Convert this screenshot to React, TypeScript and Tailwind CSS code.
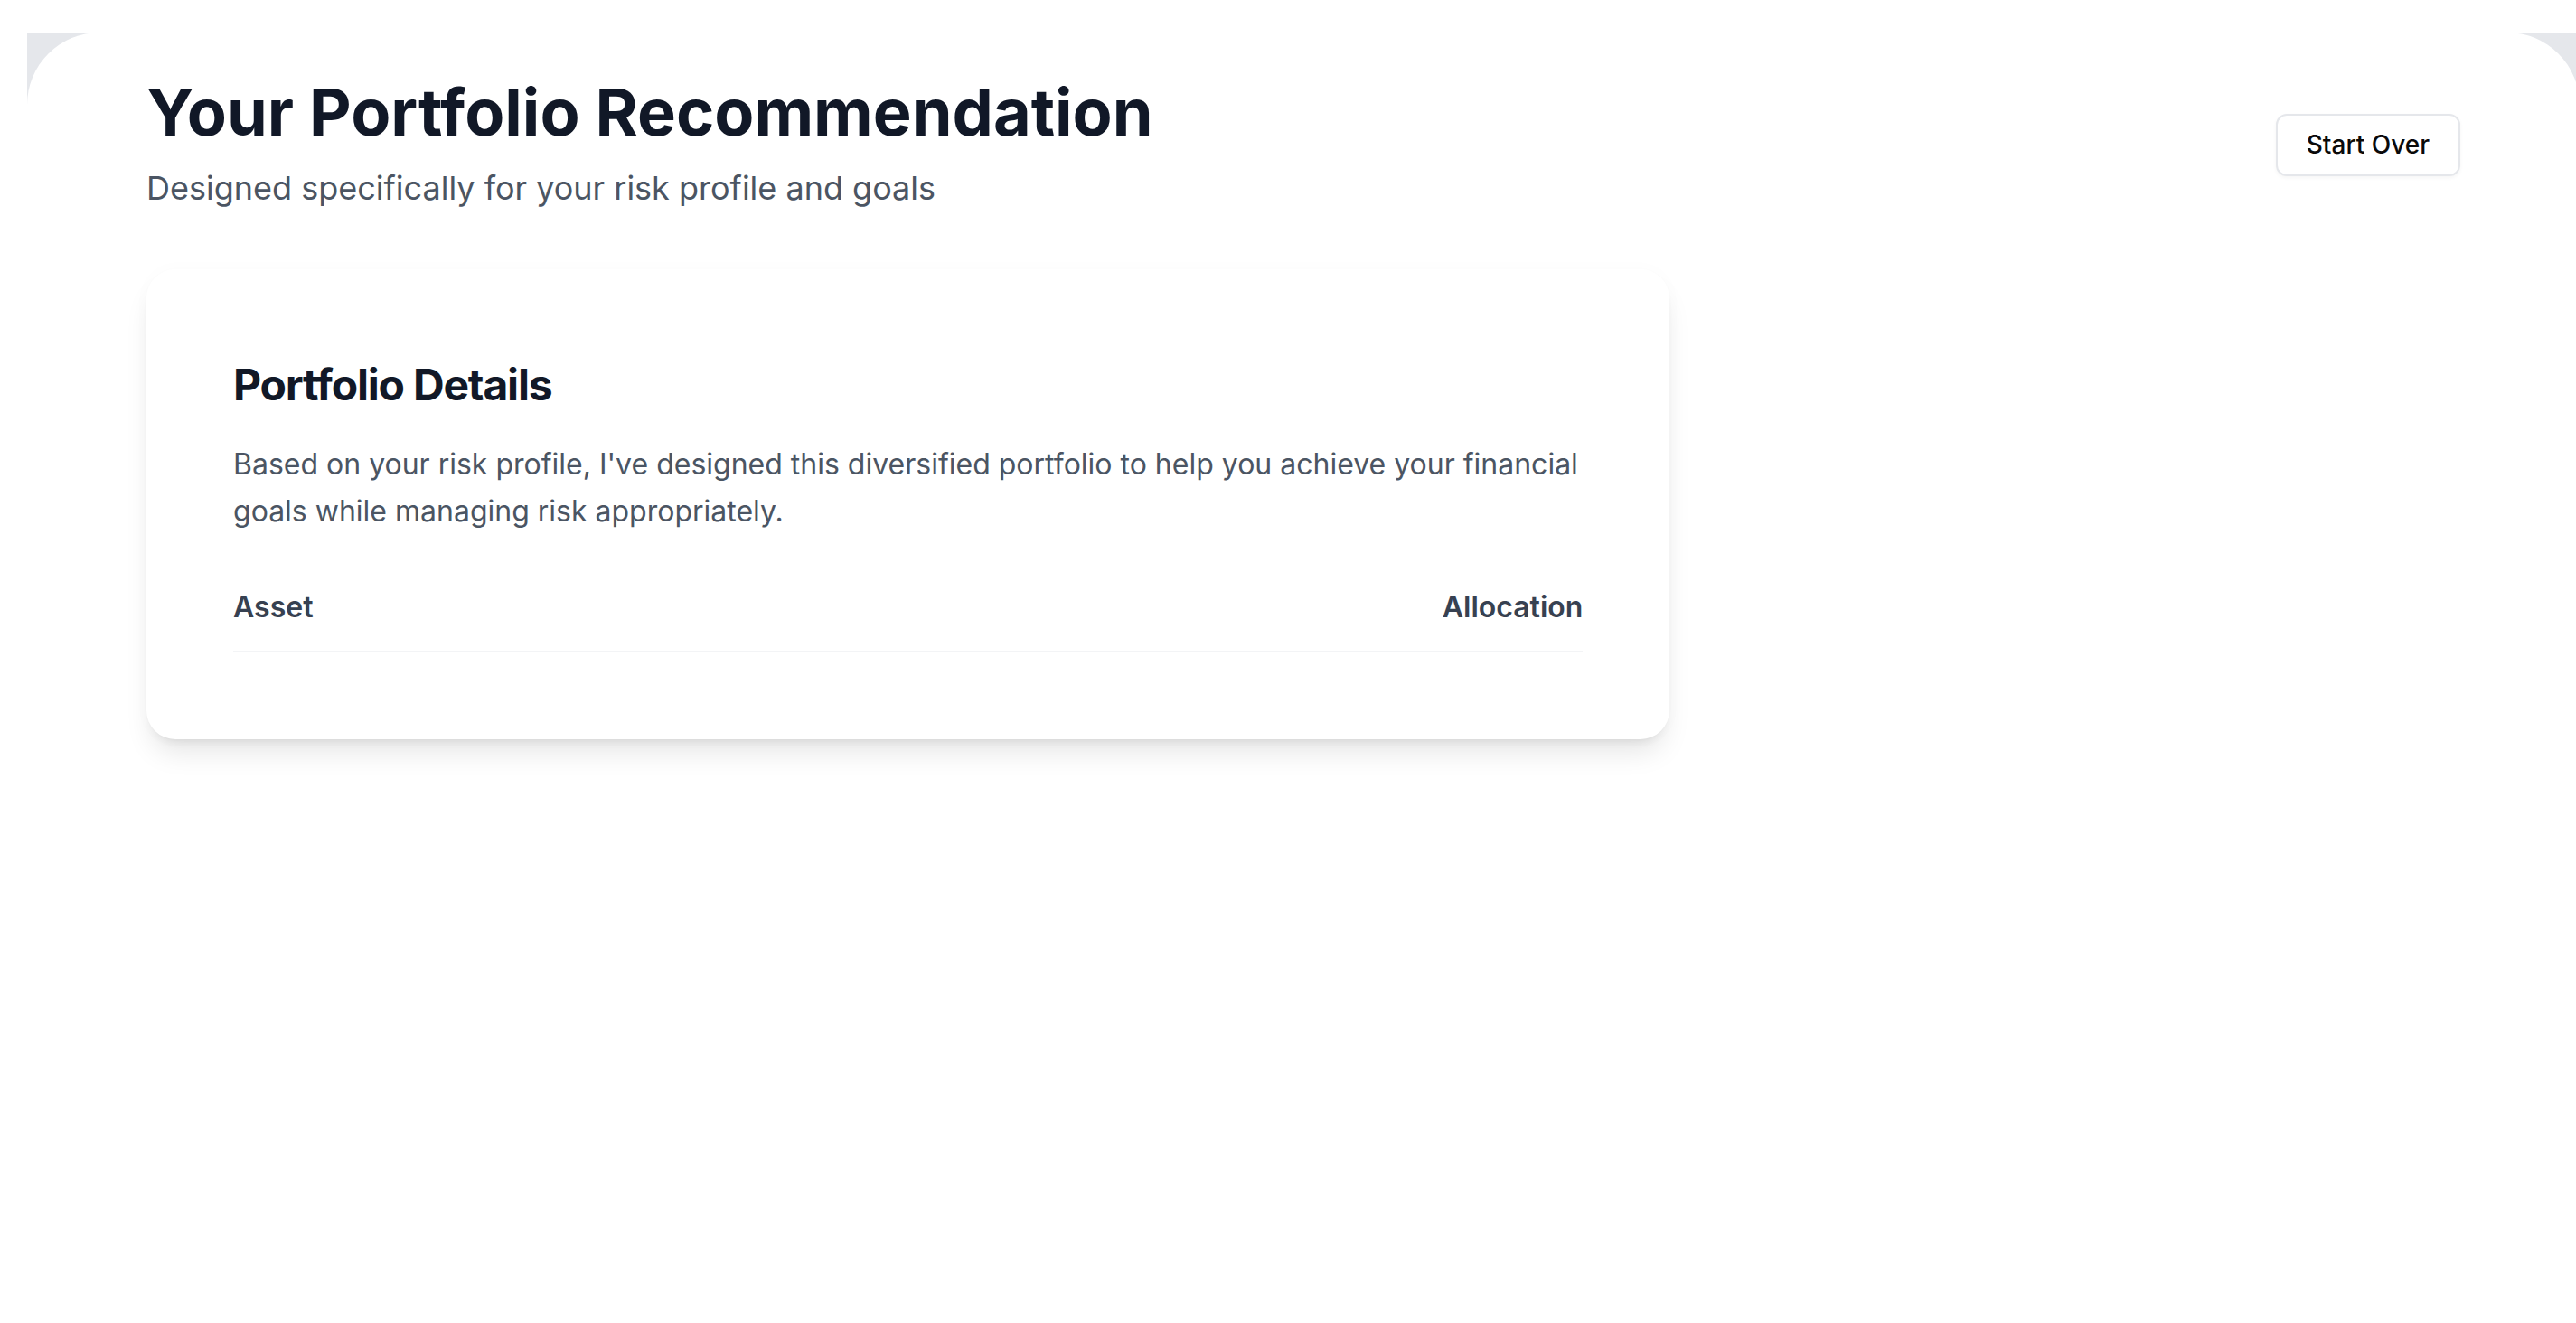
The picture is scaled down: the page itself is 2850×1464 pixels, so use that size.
export default function App() {
  return (
    <div
      className="h-screen w-screen overflow-hidden bg-white pl-[30px] pt-[36px]"
      style={{ fontFamily: 'Inter, "Noto Sans", sans-serif' }}
    >
      <div className="h-[1440px] w-[2824px] bg-[#e5e7eb]">
        <div className="h-full rounded-t-[80px] bg-white px-[132px] pt-[48px]">
          <div className="flex items-center justify-between">
            <div>
              <h1 className="text-[72px] font-bold leading-[80px] text-[#111827]">
                Your Portfolio Recommendation
              </h1>
              <p className="mt-[16px] text-[36px] leading-[56px] text-[#4b5563]">
                Designed specifically for your risk profile and goals
              </p>
            </div>
            <button className="h-[69px] rounded-[12px] border-2 border-[#e5e7eb] bg-white px-[32px] text-[28px] font-medium text-[#0a0a0a] shadow-[0_2px_4px_rgba(0,0,0,0.04)]">
              Start Over
            </button>
          </div>

          <div className="mt-[62px] grid grid-cols-3 gap-[64px]">
            <div className="col-span-2 rounded-[32px] bg-white p-[96px] shadow-[0_20px_30px_-6px_rgba(0,0,0,0.1),0_8px_12px_-8px_rgba(0,0,0,0.1),0_0_20px_rgba(0,0,0,0.02)]">
              <h2 className="text-[48px] font-bold leading-[64px] tracking-tight text-[#111827]">
                Portfolio Details
              </h2>
              <p className="mt-[30px] text-[32px] leading-[52px] text-[#4b5563]">
                Based on your risk profile, I've designed this diversified portfolio to help you achieve your financial goals while managing risk appropriately.
              </p>
              <table className="mt-[32px] w-full">
                <thead>
                  <tr className="border-b-2 border-[#f3f4f6]">
                    <th className="py-[24px] text-left text-[32px] font-semibold leading-[48px] text-[#374151]">
                      Asset
                    </th>
                    <th className="py-[24px] text-right text-[32px] font-semibold leading-[48px] text-[#374151]">
                      Allocation
                    </th>
                  </tr>
                </thead>
                <tbody></tbody>
              </table>
            </div>
            <div />
          </div>
        </div>
      </div>
    </div>
  )
}
